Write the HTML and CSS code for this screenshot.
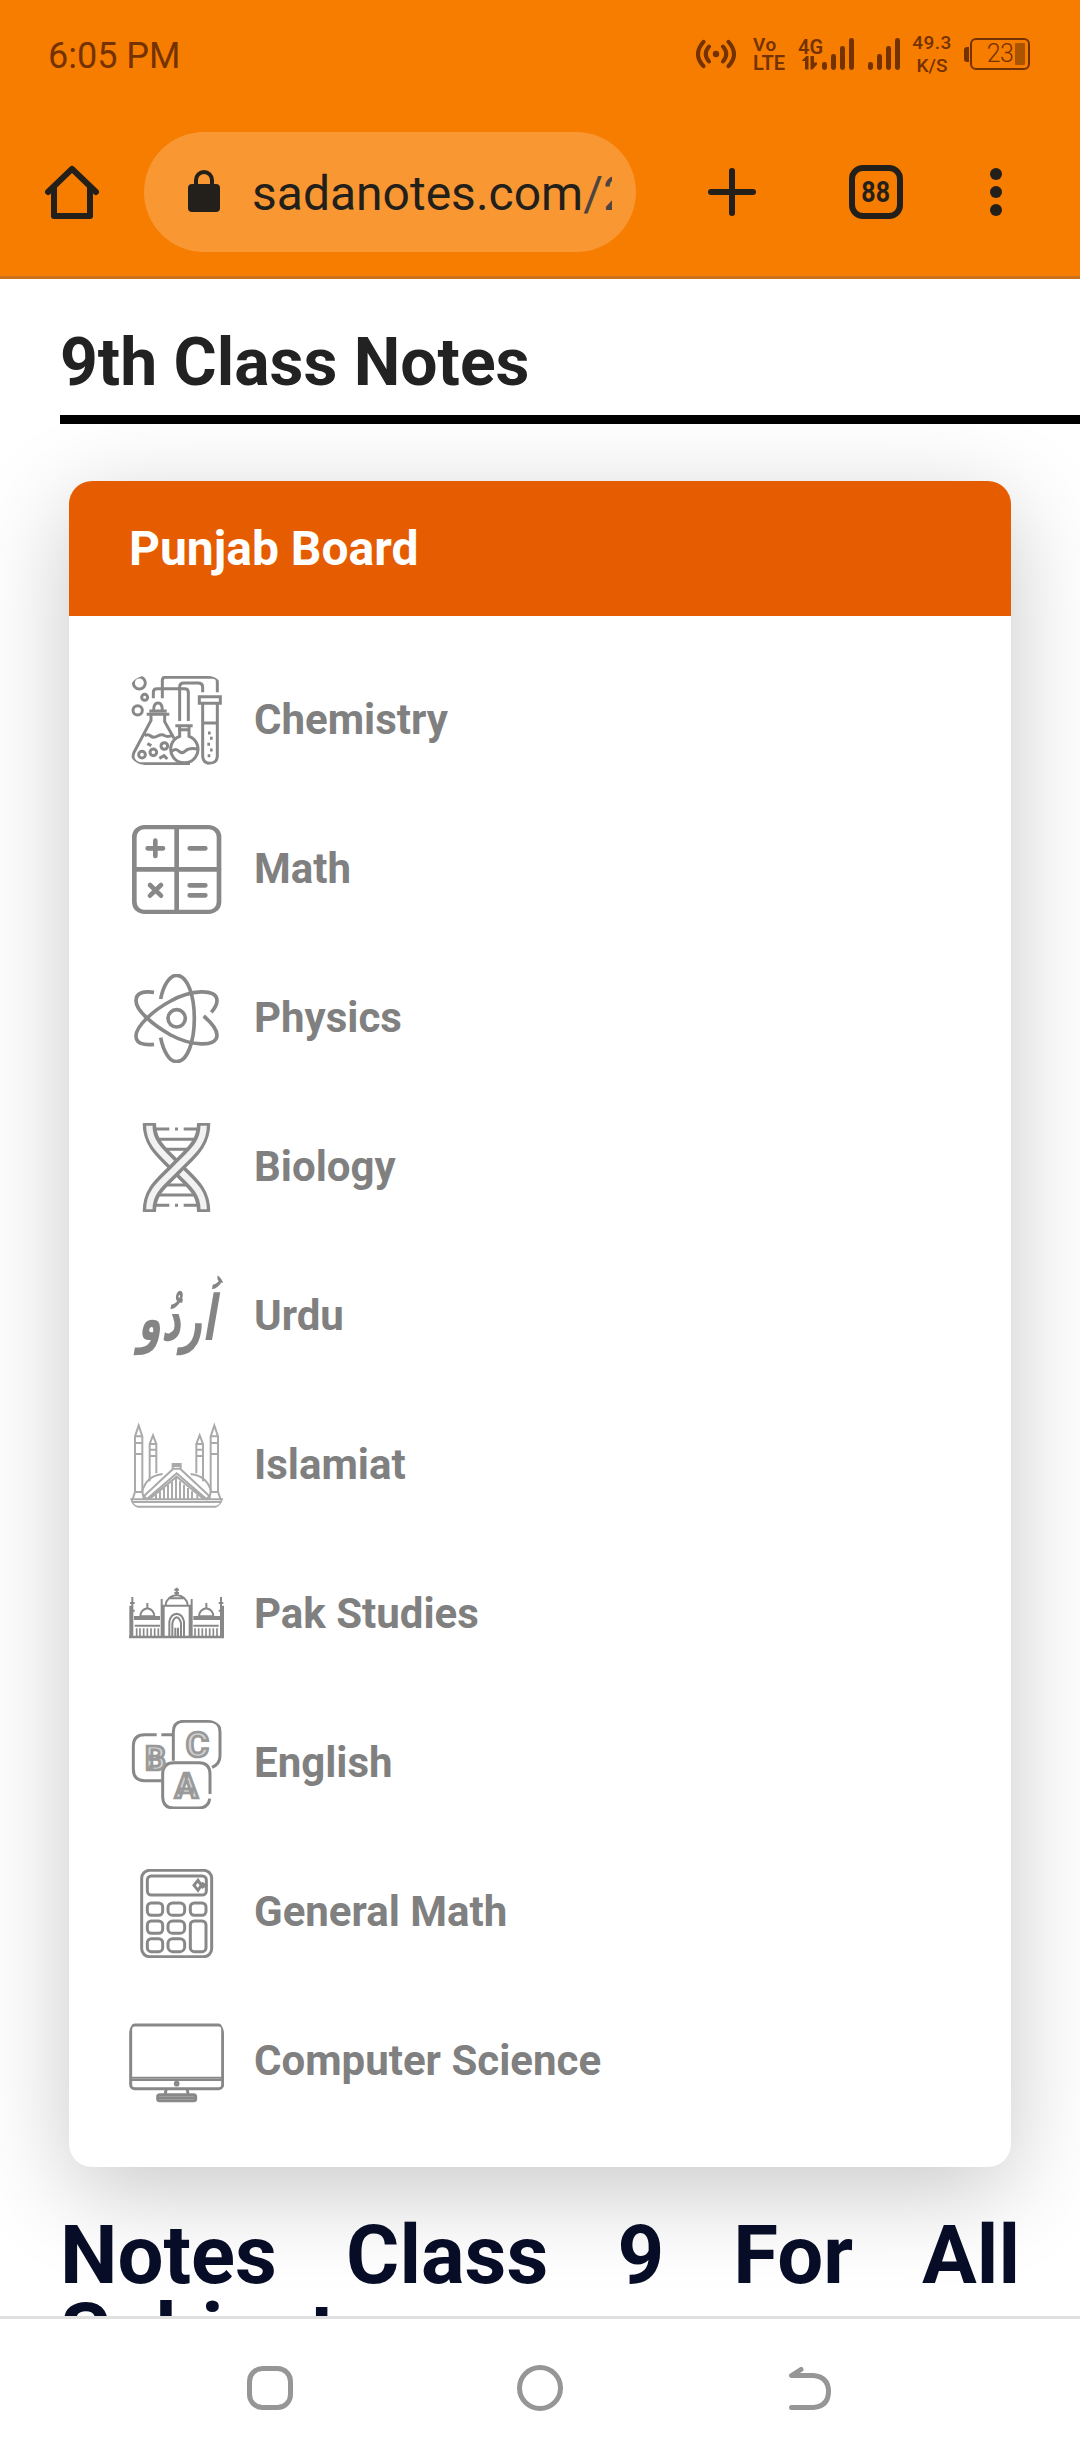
FILE: index.html
```html
<!DOCTYPE html>
<html lang="en">
<head>
<meta charset="utf-8">
<title>9th Class Notes</title>
<link rel="stylesheet" href="styles.css">
</head>
<body>
<div class="screen">
  <header class="browser">
    <div class="status">
      <span class="time">6:05 PM</span>
      <div class="indicators">
        <svg class="hotspot" width="40" height="32" viewBox="0 0 40 32"><circle cx="20" cy="16" r="3.2" fill="currentColor"/><g fill="none" stroke="currentColor" stroke-width="4" stroke-linecap="round"><path d="M13 8.500Q6.500 16 13 23.500M27 8.500Q33.500 16 27 23.500M7.500 3.800Q-3.500 16 7.500 28.200M32.500 3.800Q43.500 16 32.500 28.200"/></g></svg>
        <div class="volte"><span>Vo</span><span>LTE</span></div>
        <div class="cell">
          <div class="net"><span>4G</span><svg width="15" height="14" viewBox="0 0 15 14" fill="currentColor"><path d="M0 4.500L4.500 0H6.500V13.500H3V5H0zM8.500 0H12V6.500H15V8.500L10.500 13.500H8.500z"/></svg></div>
          <svg width="32" height="32" viewBox="0 0 32 32" fill="currentColor"><rect y="24" width="5" height="8" rx="2.400"/><rect x="9" y="16" width="5" height="16" rx="2.400"/><rect x="18" y="8" width="5" height="24" rx="2.400"/><rect x="27" width="5" height="32" rx="2.400"/></svg>
        </div>
        <svg class="sim2" width="32" height="32" viewBox="0 0 32 32" fill="currentColor"><rect y="24" width="5" height="8" rx="2.400"/><rect x="9" y="16" width="5" height="16" rx="2.400"/><rect x="18" y="8" width="5" height="24" rx="2.400"/><rect x="27" width="5" height="32" rx="2.400"/></svg>
        <div class="speed"><span>49.3</span><span>K/S</span></div>
        <div class="battery"><i class="tip"></i><div class="cellbody"><span>23</span><i class="level"></i></div></div>
      </div>
    </div>
    <div class="toolbar">
      <svg class="home" width="54" height="54" viewBox="0 0 54 54" fill="none" stroke="currentColor" stroke-width="6" stroke-linecap="round" stroke-linejoin="round"><path d="M3 27L27 3.800L51 27M9 22V51H45V22"/></svg>
      <div class="omnibox">
        <svg width="32" height="42" viewBox="0 0 32 42"><rect y="14" width="32" height="28" rx="4" fill="currentColor"/><path d="M8 16V10a8 8 0 0 1 16 0V16" fill="none" stroke="currentColor" stroke-width="4"/></svg>
        <span class="url">sadanotes.com<span class="path">/2</span></span>
      </div>
      <svg class="plus" width="48" height="48" viewBox="0 0 48 48" fill="none" stroke="currentColor" stroke-width="6" stroke-linecap="round"><path d="M24 3V45M3 24H45"/></svg>
      <div class="tabs"><span>88</span></div>
      <svg class="more" width="12" height="48" viewBox="0 0 12 48" fill="currentColor"><circle cx="6" cy="6" r="6"/><circle cx="6" cy="24" r="6"/><circle cx="6" cy="42" r="6"/></svg>
    </div>
  </header>

  <main class="page">
    <h1>9th Class Notes</h1>
    <section class="card">
      <h3>Punjab Board</h3>
      <ul>
        <li><svg viewBox="57 63 285 267"><g stroke-width="9"><circle cx="88" cy="84" r="18"/><circle cx="104" cy="127" r="9"/><circle cx="83" cy="166" r="14"/><path d="M130 130V112Q130 101 141 101H224Q235 101 235 112V198M157 130V76Q157 67 166 67H308Q322 67 322 80V112M209 198V96Q209 84 221 84H264Q278 84 278 96V112"/><path d="M131 165Q131 144 144 144T157 165M110 178H178M118 168H170M123 182V196L72 292Q62 318 88 326H240M164 182V200L192 250M104 242Q114 236 122 243T143 243T164 242T190 240"/><circle cx="96" cy="299" r="10"/><circle cx="130" cy="292" r="10"/><circle cx="163" cy="273" r="10"/><path d="M112 266L124 272M148 310L162 302L172 312"/><path d="M196 212H248M204 224H240M209 214V244A41 41 0 1 0 237 244V214M184 290Q196 278 206 288T226 288T262 282"/><path d="M268 125H331V145H268ZM278 147V304Q280 325 300 325T322 304V147M278 204H322"/><path d="M294 234h8M300 250h8M292 268h8M300 285h8M293 302h8"/></g></svg><span>Chemistry</span></li>
        <li><svg viewBox="57 510 285 267"><g stroke-width="14" stroke-linecap="round"><rect x="73" y="516" width="254" height="255" rx="30"/><path d="M200 516V771M73 643H327"/><path d="M113 580H159M136 557V603M239 580H286M239 691H286M239 721H286M120 690L153 722M153 690L120 722"/></g></svg><span>Math</span></li>
        <li><svg viewBox="57 57 285 267"><g stroke-width="11"><circle cx="200" cy="190" r="26"/><path d="M152 132C160 90 179 61 200 61C232 61 253 120 253 190S232 320 200 320C179 320 160 290 152 248"/><path d="M132 112C100 108 78 113 78 137C78 167 130 211 182 240C240 271 321 280 321 240C321 220 302 201 281 183"/><path d="M132 268C100 272 78 265 78 243C78 213 130 166 182 138C240 105 321 98 321 137C321 150 314 160 304 172"/></g></svg><span>Physics</span></li>
        <li><svg viewBox="57 504 285 267"><g stroke-width="9"><path d="M136 522H178M195 522H204M221 522H264M146 553H254M162 583H238M162 690H238M146 720H254M136 751H178M195 751H204M221 751H264"/><g><path d="M118 504C118 568 160 596 200 638S281 705 281 771" stroke-width="40"/><path class="core" d="M118 512C118 568 160 596 200 638S281 705 281 763" stroke-width="19"/><path d="M281 504C281 568 240 596 200 638S118 705 118 771" stroke-width="40"/><path class="core" d="M281 512C281 568 240 596 200 638S118 705 118 763" stroke-width="19"/></g></g></svg><span>Biology</span></li>
        <li><svg viewBox="57 51 285 267"><text class="urdu" x="200" y="255" textLength="232" lengthAdjust="spacingAndGlyphs" transform="matrix(1 0 -.25 1.450 63 -115)">اُردُو</text></svg><span>Urdu</span></li>
        <li><svg viewBox="57 499 285 267" class="faint"><g stroke-width="6"><path d="M64 734H336Q332 756 316 756H84Q68 756 64 734ZM64 742H336" /><path d="M75 712V545L86 512L97 545V712ZM75 545H97M75 565H97M75 598H97M302 712V545L313 512L324 545V712ZM302 545H324M302 565H324M302 598H324"/><path d="M119 680V568L129 542L139 568V656M119 568H139M119 585H139M119 604H139M259 656V568L269 542L279 568V680M259 568H279M259 585H279M259 604H279"/><path d="M96 712Q108 664 158 658M304 712Q292 664 242 658M68 734L75 712H97L102 734M298 734L302 712H324L332 734"/><path d="M102 724L188 644V628H212V644L298 724M110 734L200 656L290 734M102 724L112 736M298 724L288 736M118 734L200 666L282 734M188 634H212M188 642H212"/><path d="M150 710V734M162 700V734M174 690V734M186 680V734M198 670V734M210 680V734M222 690V734M234 700V734M246 710V734M138 720V734M262 720V734"/></g></svg><span>Islamiat</span></li>
        <li><svg viewBox="57 46 285 267"><g stroke-width="6"><path d="M57 244H342" stroke-width="8"/><path d="M67 244V124M60 142H74M60 165H74M72 184H150M72 190H150M250 184H330M250 190H330M333 244V124M326 142H340M326 165H340M61 150V244M339 150V244M74 210H150M250 210H326"/><path d="M155 244V130M161 244V150M245 130V244M239 244V150M155 150H245M167 148Q170 122 200 118Q230 122 233 148M200 96V120M193 102H207M193 112H207M178 128H222"/><path d="M91 182Q92 162 112 158Q132 162 133 182ZM112 142V158M267 182Q268 162 289 158Q309 162 310 182ZM289 142V158"/><path d="M178 244V198Q182 176 200 174Q218 176 222 198V244M187 244V204Q190 187 200 185Q210 187 213 204V244M196 216V244M204 216V244"/><path d="M80 218V244M90 218V244M101 218V244M112 218V244M123 218V244M134 218V244M145 218V244M255 218V244M266 218V244M277 218V244M288 218V244M299 218V244M310 218V244M321 218V244" stroke-width="5"/></g></svg><span>Pak Studies</span></li>
        <li><svg viewBox="57 494 285 267"><g stroke-width="9"><path d="M140 538H104Q70 538 70 572V642Q70 676 104 676H154M154 538H188"/><path d="M190 616V530Q190 498 222 498H298Q330 498 330 530V602Q330 626 306 636"/><path d="M300 716V656Q300 622 266 622H192Q158 622 158 656V724Q158 758 192 758H266Q296 758 299 730"/></g><g class="letter"><text x="136" y="643" font-size="98">B</text><text x="262" y="604" font-size="106">C</text><text x="229" y="728" font-size="104">A</text></g></svg><span>English</span></li>
        <li><svg viewBox="57 42 285 267"><g stroke-width="9"><rect x="95" y="46" width="210" height="259" rx="24"/><rect x="112" y="63" width="177" height="57" rx="12"/><path d="M264 76L274 91L264 106L252 91ZM274 84L286 91L274 98"/><rect x="112" y="144" width="46" height="37" rx="12"/><rect x="174" y="144" width="50" height="37" rx="14"/><rect x="241" y="144" width="47" height="37" rx="12"/><rect x="112" y="198" width="46" height="37" rx="12"/><rect x="174" y="198" width="50" height="37" rx="14"/><rect x="241" y="198" width="47" height="92" rx="12"/><rect x="112" y="251" width="46" height="39" rx="12"/><rect x="174" y="251" width="50" height="39" rx="14"/></g></svg><span>General Math</span></li>
        <li><svg viewBox="57 488 285 267"><g stroke-width="9"><rect x="62" y="509" width="276" height="191" rx="12"/><path d="M62 667H338M62 674H338" stroke-width="6"/><circle cx="200" cy="685" r="4"/><path d="M168 703L166 716M232 703L234 716"/><rect x="143" y="718" width="114" height="18" rx="6"/><path d="M146 727H254"/></g></svg><span>Computer Science</span></li>
      </ul>
    </section>
    <h2>Notes Class 9 For All Subjects</h2>
  </main>

  <nav class="sysnav">
    <svg width="46" height="46" viewBox="0 0 46 46"><rect x="2.500" y="3.500" width="41" height="39" rx="13"/></svg>
    <svg width="46" height="46" viewBox="0 0 46 46"><circle cx="23" cy="23" r="20.500"/></svg>
    <svg width="46" height="46" viewBox="0 0 46 46"><path d="M14 4.500L4.500 10.500H26.500Q41.500 12 41.500 26.500T26.500 42.500H4.500"/></svg>
  </nav>
</div>
</body>
</html>
```
FILE: styles.css
```css
* { box-sizing: border-box; margin: 0; padding: 0; }
body { background: #fff; font-family: Roboto, sans-serif; }
svg { display: block; flex: none; }

.screen { width: 1080px; height: 2460px; display: flex; flex-direction: column; overflow: hidden; }

/* Browser chrome */
.browser { flex: none; height: 279px; background: #f77d00; border-bottom: 3px solid #cc701a; }
.status { height: 108px; padding: 0 50px 0 48px; display: flex; justify-content: space-between; align-items: center; color: #733200; }
.time { font-size: 36px; line-height: 42px; margin-top: 4px; }
.indicators { display: flex; align-items: center; width: 334px; font-weight: 600; }
.volte { margin-left: 17px; width: 45px; display: flex; flex-direction: column; font-size: 20px; line-height: 18px; }
.volte span:first-child { font-size: 19px; letter-spacing: .6px; }
.cell { display: flex; width: 70px; }
.net { width: 24px; font-size: 20px; line-height: 18px; }
.net svg { margin-left: 4px; }
.sim2 { margin-right: 12px; }
.speed { width: 40px; display: flex; flex-direction: column; align-items: center; font-size: 19px; line-height: 23px; font-weight: 500; }
.speed span:first-child { letter-spacing: .4px; }
.battery { margin-left: auto; display: flex; align-items: center; }
.tip { width: 5px; height: 15px; border-radius: 3px 0 0 3px; background: currentColor; margin-right: 1px; }
.cellbody { width: 60px; height: 32px; border: 2.500px solid; border-radius: 6px; display: flex; align-items: center; justify-content: flex-end; gap: 2px; padding-right: 3px; }
.cellbody span { font-size: 25px; line-height: 28px; font-weight: 300; letter-spacing: -.8px; }
.level { width: 10px; height: 22px; border-radius: 1px; background: #ab5400; }

.toolbar { height: 168px; padding: 0 78px 0 45px; display: flex; align-items: center; color: #231f1a; }
.omnibox { margin-left: 45px; width: 492px; height: 120px; border-radius: 60px; background: #f99733; padding: 0 24px 0 44px; display: flex; align-items: center; gap: 32px; }
.omnibox svg { margin-top: -2px; }
.url { flex: 1; overflow: hidden; white-space: nowrap; font-size: 48px; line-height: 60px; margin-top: 3px; }
.path { color: #4c4440; }
.plus { margin-left: 72px; }
.tabs { margin-left: 93px; width: 54px; height: 54px; border: 6px solid; border-radius: 14px; display: flex; align-items: center; justify-content: center; font-size: 29px; font-weight: 700; }
.tabs span { transform: scaleX(.86); }
.more { margin-left: auto; }

/* Page content */
.page { flex: 1; min-height: 0; overflow: hidden; padding: 29px 0 0 60px; }
h1 { height: 116px; border-bottom: 9px solid #000; font-size: 66px; line-height: 110px; font-weight: 700; color: #222; white-space: nowrap; }
.card { margin: 57px 69px 0 9px; height: 1686px; border-radius: 23px; background: #fff; box-shadow: 0 24px 96px rgba(0, 0, 0, .22); }
h3 { height: 135px; padding-left: 60px; border-radius: 23px 23px 0 0; background: #e65c00; color: #fff; font-size: 48px; line-height: 135px; font-weight: 700; }
ul { list-style: none; padding: 60px 60px 0; display: flex; flex-direction: column; gap: 60.100px; }
li { height: 89px; display: flex; align-items: center; gap: 30px; color: #808080; font-size: 42px; line-height: 50px; font-weight: 700; }
li span { margin-top: -2px; }
li svg { width: 95px; height: 89px; fill: none; stroke: #888; border-radius: 16px; }
li .core { stroke: #f2f2f2; }
li .faint { stroke: #aaa; }
.urdu { font: 700 130px "DejaVu Sans", sans-serif; fill: #858585; stroke: none; text-anchor: middle; }
.letter { font-family: Roboto, sans-serif; font-weight: 700; text-anchor: middle; stroke: #999; stroke-width: 8px; fill: #d2d2d2; }
h2 { margin: 49px 60px 0 0; font-size: 81.500px; line-height: 78px; font-weight: 700; color: #070d26; text-align: justify; }

/* System navigation */
.sysnav { flex: none; height: 144px; border-top: 3px solid #e0e0e0; background: #fff; padding: 0 247px 3px; display: flex; align-items: center; justify-content: space-between; }
.sysnav svg { fill: none; stroke: #969696; stroke-width: 5; stroke-linecap: round; stroke-linejoin: round; }
```
